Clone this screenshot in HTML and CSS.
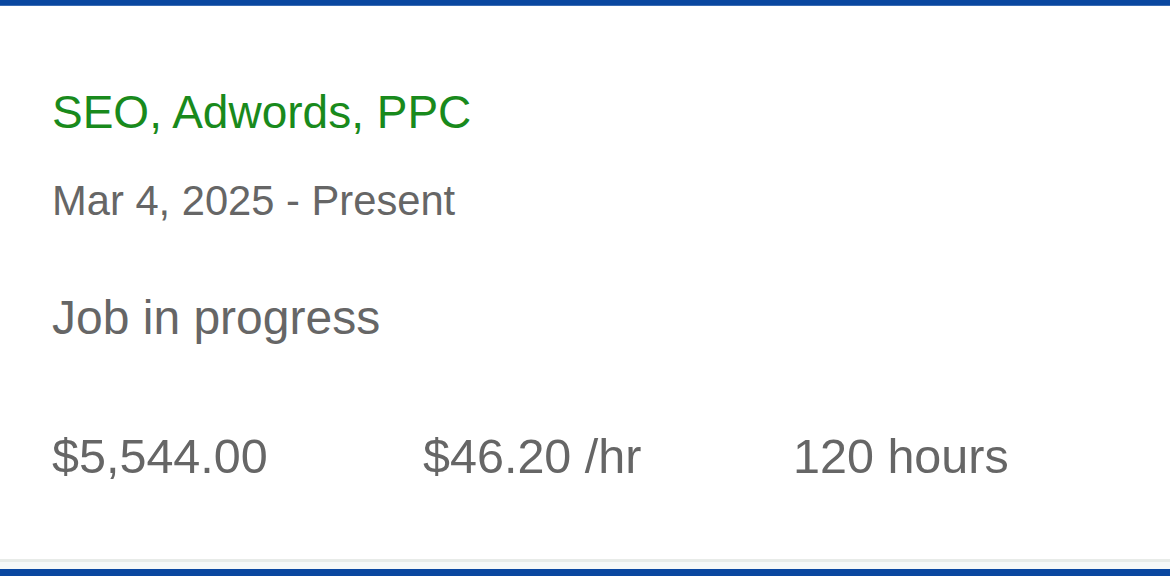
FILE: index.html
```html
<!DOCTYPE html>
<html>
<head>
  <title>Contract</title>
  <link rel="stylesheet" href="styles.css">
</head>
<body>
  <div class="top-bar"></div>

  <div class="job-card">
    <h2 class="job-title">SEO, Adwords, PPC</h2>
    <p class="job-dates">Mar 4, 2025 - Present</p>
    <p class="job-status">Job in progress</p>

    <div class="job-stats">
      <span>$5,544.00</span>
      <span>$46.20 /hr</span>
      <span>120 hours</span>
    </div>
  </div>

  <div class="bottom-bar"></div>
</body>
</html>
```

FILE: styles.css
```css
html, body {
  margin: 0;
  padding: 0;
  height: 100%;
}
body {
  font-family: "Liberation Sans", Arial, sans-serif;
  background-color: #fff;
  color: #666;
  display: flex;
  flex-direction: column;
  overflow: hidden;
}
.top-bar {
  height: 5px;
  background-color: #0a47a0;
  border-bottom: 1px solid #3a6cb4;
}
.job-card {
  flex: 1;
  padding: 76px 0 0 52px;
}
.job-title {
  margin: 0;
  font-size: 46px;
  font-weight: normal;
  line-height: 60px;
  color: #198a1c;
}
.job-dates {
  margin: 29px 0 0;
  font-size: 41.7px;
  line-height: 60px;
}
.job-status {
  margin: 57px 0 0;
  font-size: 48px;
  line-height: 60px;
}
.job-stats {
  margin-top: 78px;
  display: grid;
  grid-template-columns: 371px 370px auto;
  font-size: 48.5px;
  line-height: 60px;
}
.bottom-bar {
  height: 7px;
  border-top: 3px solid #e8ebe8;
  background-color: #f6f8f8;
  border-bottom: 7px solid #0a47a0;
}
```
